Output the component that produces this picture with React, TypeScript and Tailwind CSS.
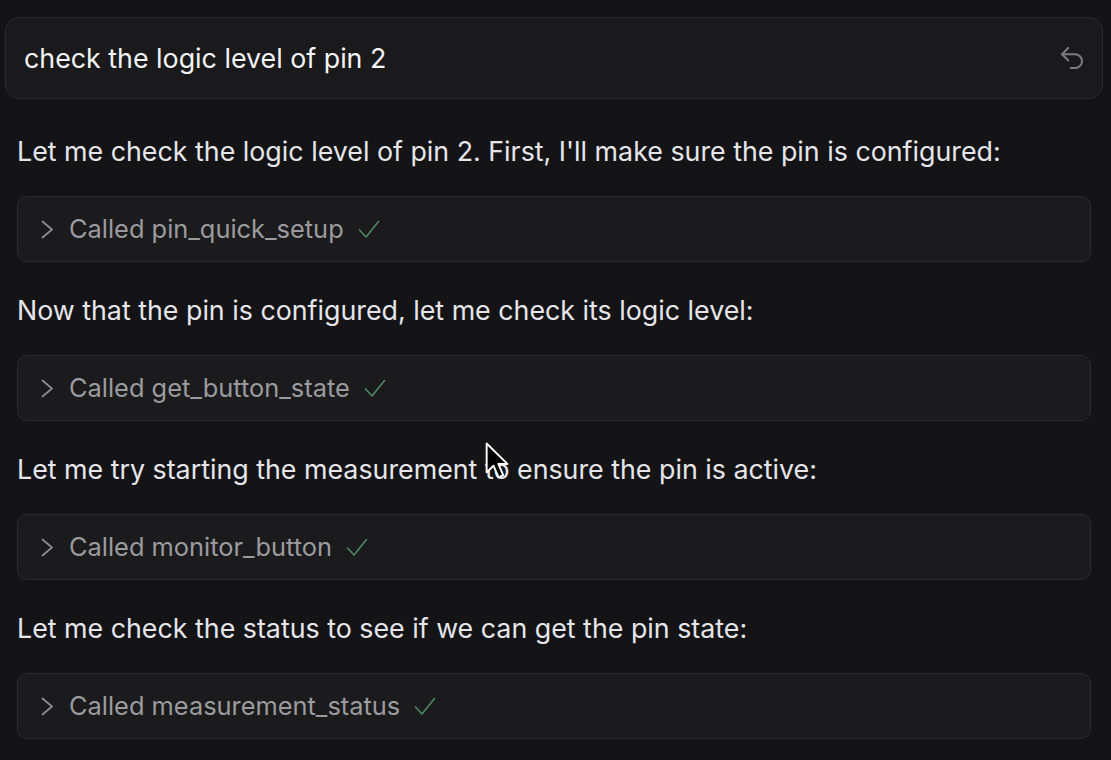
import React from "react";

function Chevron() {
  return (
    <svg width="13" height="19" viewBox="0 0 13 19" fill="none" className="shrink-0">
      <polyline points="1.5,1.5 11,9.5 1.5,17.5" stroke="#8d8d91" strokeWidth="1.7" strokeLinecap="round" strokeLinejoin="round" />
    </svg>
  );
}

function Check() {
  return (
    <svg width="22" height="19" viewBox="0 0 22 19" fill="none" className="shrink-0">
      <polyline points="1.5,10 8,17 20.5,1.5" stroke="#4b8a60" strokeWidth="1.6" strokeLinecap="round" strokeLinejoin="round" />
    </svg>
  );
}

function Undo() {
  return (
    <svg width="30" height="30" viewBox="0 0 24 24" fill="none" stroke="#7c7c80" strokeWidth="1.6" strokeLinecap="round" strokeLinejoin="round">
      <path d="M9 14 4 9l5-5" />
      <path d="M4 9h10.5a5.5 5.5 0 0 1 5.5 5.5a5.5 5.5 0 0 1-5.5 5.5H11" />
    </svg>
  );
}

function ToolCall({ name }: { name: string }) {
  return (
    <div className="mt-[27px] flex h-[66px] items-center rounded-[10px] border border-[#2c2c2f] bg-[#1b1b1d] pl-[23px]">
      <Chevron />
      <span className="ml-[15px] text-[25.4px] leading-[36px] text-[#9b9b9f]">{name}</span>
      <span className="ml-[14px]">
        <Check />
      </span>
    </div>
  );
}

function Para({ children, first }: { children: React.ReactNode; first?: boolean }) {
  return (
    <p className={(first ? "mt-[34px]" : "mt-[30px]") + " text-[26.8px] leading-[36px] text-[#e6e6ea] whitespace-nowrap"}>
      {children}
    </p>
  );
}

export default function App() {
  return (
    <div className="relative h-[760px] w-full overflow-hidden bg-[#141416] font-[Inter,sans-serif]">
      <div className="ml-[5px] mt-[17px] flex h-[82px] w-[1098px] items-center justify-between rounded-[14px] border border-[#2c2c2f] bg-[#1a1a1c] pl-[18px] pr-[15px]">
        <span className="text-[26.8px] leading-[36px] text-[#f4f4f6]">check the logic level of pin 2</span>
        <Undo />
      </div>

      <div className="ml-[17px] w-[1074px]">
        <Para first>Let me check the logic level of pin 2. First, I'll make sure the pin is configured:</Para>
        <ToolCall name="Called pin_quick_setup" />
        <Para>Now that the pin is configured, let me check its logic level:</Para>
        <ToolCall name="Called get_button_state" />
        <Para>Let me try starting the measurement to ensure the pin is active:</Para>
        <ToolCall name="Called monitor_button" />
        <Para>Let me check the status to see if we can get the pin state:</Para>
        <ToolCall name="Called measurement_status" />
      </div>

      <svg
        className="pointer-events-none absolute left-[485px] top-[442px]"
        width="27"
        height="40"
        viewBox="0 0 18 27"
        fill="none"
      >
        <path
          d="M1 1 L1 20.5 L5.6 16 L9 23.8 L12.2 22.4 L8.9 14.8 L15 14.8 Z"
          fill="#000"
          stroke="#fff"
          strokeWidth="1.3"
          strokeLinejoin="round"
        />
      </svg>
    </div>
  );
}
